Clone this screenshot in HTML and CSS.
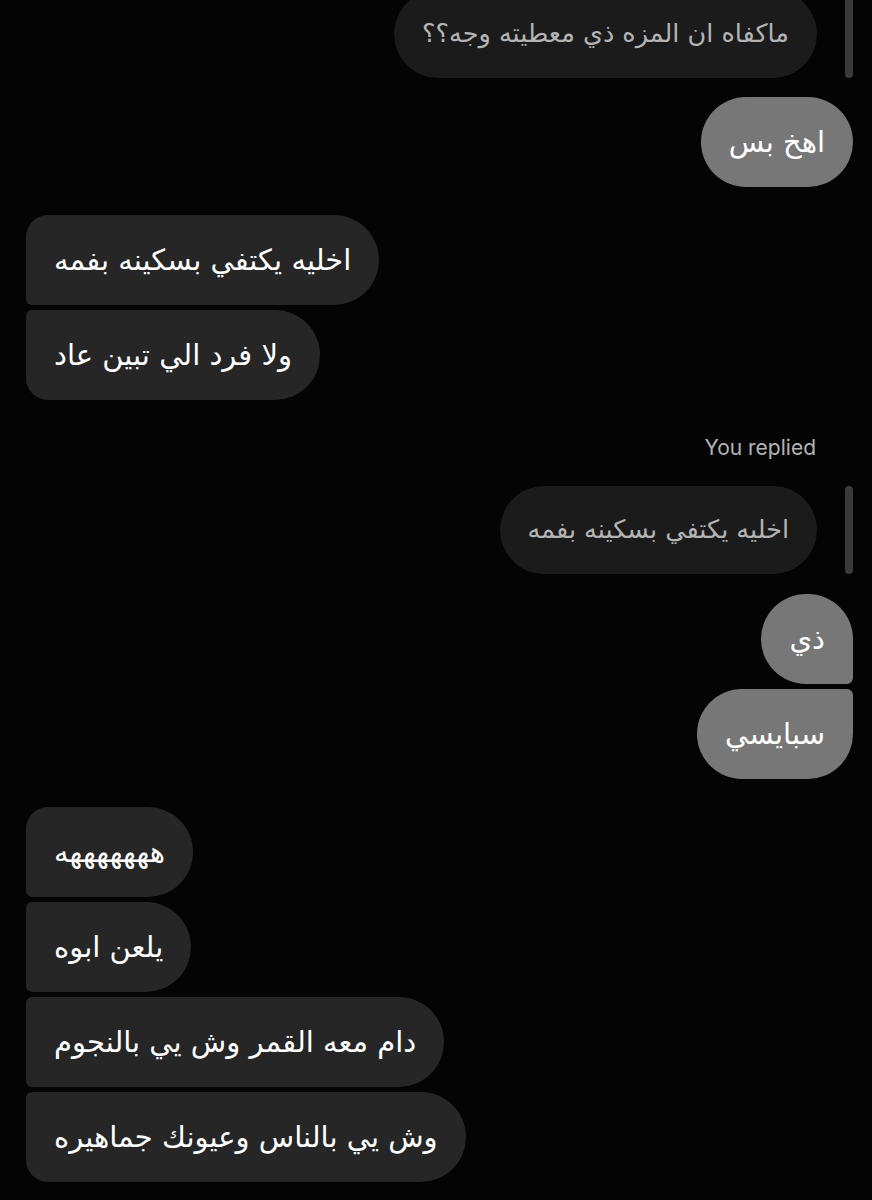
FILE: index.html
```html
<!doctype html>
<html lang="ar">
  <head>
    <meta charset="UTF-8" />
    <meta name="viewport" content="width=device-width, initial-scale=1.0" />
    <title>Chat</title>
    <link rel="stylesheet" href="styles.css">
  </head>
  <body>
    <main class="thread">
      <div class="row out quoted top-cut">
        <div class="bubble quote" dir="rtl">ماكفاه ان المزه ذي معطيته وجه؟؟</div>
        <span class="reply-bar"></span>
      </div>

      <div class="row out gap-s">
        <div class="bubble sent solo" dir="rtl">اهخ بس</div>
      </div>

      <div class="group in gap-m">
        <div class="bubble recv first" dir="rtl">اخليه يكتفي بسكينه بفمه</div>
        <div class="bubble recv last" dir="rtl">ولا فرد الي تبين عاد</div>
      </div>

      <div class="replied-label">You replied</div>

      <div class="row out quoted">
        <div class="bubble quote" dir="rtl">اخليه يكتفي بسكينه بفمه</div>
        <span class="reply-bar"></span>
      </div>

      <div class="group out gap-s">
        <div class="bubble sent first" dir="rtl">ذي</div>
        <div class="bubble sent last" dir="rtl">سبايسي</div>
      </div>

      <div class="group in gap-m">
        <div class="bubble recv first" dir="rtl">هههههههه</div>
        <div class="bubble recv mid" dir="rtl">يلعن ابوه</div>
        <div class="bubble recv mid" dir="rtl">دام معه القمر وش يي بالنجوم</div>
        <div class="bubble recv last" dir="rtl">وش يي بالناس وعيونك جماهيره</div>
      </div>
    </main>
  </body>
</html>
```

FILE: styles.css
```css
:root {
  --bg: #040404;
  --recv: #262626;
  --sent: #777777;
  --quote: #1b1b1b;
  --bar: #3a3a3a;
  --fg: #ffffff;
  --muted: #b4b4b4;
}

* {
  box-sizing: border-box;
}

html,
body {
  background: var(--bg);
}

body {
  margin: 0;
  color: var(--fg);
  font-family: 'DejaVu Sans', sans-serif;
  overflow: hidden;
}

.thread {
  display: flex;
  flex-direction: column;
  padding: 0 19px 0 26px;
}

.row,
.group {
  display: flex;
}

.row.out {
  justify-content: flex-end;
  align-items: stretch;
}

.group {
  flex-direction: column;
  gap: 5px;
}
.group.in {
  align-items: flex-start;
}
.group.out {
  align-items: flex-end;
}

.top-cut {
  margin-top: -10px;
}
.gap-s {
  margin-top: 19px;
}
.gap-m {
  margin-top: 28px;
}

.bubble {
  height: 90px;
  display: flex;
  align-items: center;
  padding: 0 28px;
  font-size: 29px;
  line-height: 1;
  border-radius: 45px;
  white-space: nowrap;
}

.bubble.recv {
  background: var(--recv);
}
.bubble.recv.first {
  border-radius: 22px 45px 45px 6px;
}
.bubble.recv.mid {
  border-radius: 6px 45px 45px 6px;
}
.bubble.recv.last {
  border-radius: 6px 45px 45px 22px;
}

.bubble.sent {
  background: var(--sent);
}
.bubble.sent.first {
  border-radius: 45px 45px 6px 45px;
}
.bubble.sent.last {
  border-radius: 45px 6px 45px 45px;
}

.bubble.quote {
  height: 88px;
  font-size: 25.5px;
  background: var(--quote);
  color: var(--muted);
}

.reply-bar {
  width: 8px;
  margin-left: 28px;
  border-radius: 4px;
  background: var(--bar);
}

.replied-label {
  align-self: flex-end;
  margin: 36px 37px 0 0;
  font-family: Inter, 'Liberation Sans', sans-serif;
  font-size: 21px;
  color: var(--muted);
  line-height: 24px;
}

.replied-label + .row {
  margin-top: 26px;
}

.quoted + .group {
  margin-top: 20px;
}
```
